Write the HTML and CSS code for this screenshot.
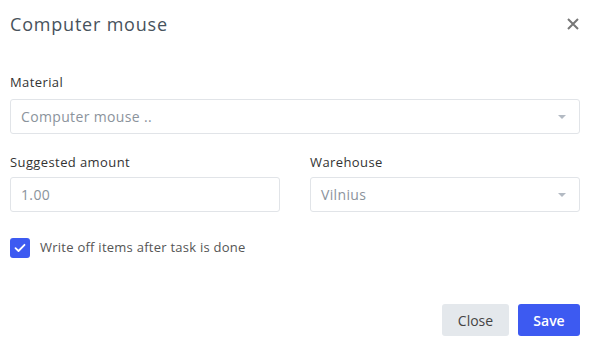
FILE: index.html
```html
<!DOCTYPE html>
<html lang="en">
<head>
    <meta charset="UTF-8">
    <title>Computer mouse</title>
    <link rel="stylesheet" href="styles.css">
</head>
<body>
    <div class="modal">
        <!-- Header -->
        <div class="modal-header">
            <h1 class="modal-title">Computer mouse</h1>
            <button class="close-x" aria-label="Close">
                <svg width="12" height="12" viewBox="0 0 12 12">
                    <path d="M1 1L11 11M11 1L1 11" stroke="#777" stroke-width="2" fill="none"/>
                </svg>
            </button>
        </div>

        <!-- Material -->
        <div class="form-group first">
            <label class="form-label">Material</label>
            <div class="select">
                <span class="placeholder">Computer mouse ..</span>
                <span class="caret"></span>
            </div>
        </div>

        <!-- Amount + warehouse -->
        <div class="form-row">
            <div class="form-group">
                <label class="form-label">Suggested amount</label>
                <div class="input"><span class="placeholder">1.00</span></div>
            </div>
            <div class="form-group">
                <label class="form-label">Warehouse</label>
                <div class="select">
                    <span class="placeholder">Vilnius</span>
                    <span class="caret"></span>
                </div>
            </div>
        </div>

        <!-- Checkbox -->
        <div class="check-row">
            <span class="checkbox">
                <svg width="12" height="10" viewBox="0 0 12 10">
                    <path d="M1.5 5.2L4.5 8L10.5 1.8" stroke="#fff" stroke-width="1.8" fill="none" stroke-linecap="round" stroke-linejoin="round"/>
                </svg>
            </span>
            <span class="check-label">Write off items after task is done</span>
        </div>

        <!-- Footer -->
        <div class="modal-footer">
            <button class="btn btn-close">Close</button>
            <button class="btn btn-save">Save</button>
        </div>
    </div>
</body>
</html>
```

FILE: styles.css
```css
/* Basic Reset */
body, h1, label, button {
    margin: 0;
    padding: 0;
    box-sizing: border-box;
}

body {
    font-family: "Open Sans", Arial, sans-serif;
    background-color: #fff;
    color: #333;
}

.modal {
    width: 592px;
    height: 344px;
    padding: 12px 12px 0 10px;
    box-sizing: border-box;
}

/* Header */
.modal-header {
    display: flex;
    justify-content: space-between;
    align-items: center;
    height: 24px;
}

.modal-title {
    font-size: 18px;
    font-weight: normal;
    line-height: 24px;
    letter-spacing: 0.8px;
    color: #47525c;
}

.close-x {
    background: none;
    border: none;
    width: 12px;
    height: 12px;
    margin-right: 1px;
    margin-top: -1px;
    display: flex;
    cursor: pointer;
}

/* Form */
.form-group.first {
    margin-top: 36px;
}

.form-label {
    display: block;
    font-size: 13px;
    line-height: 20px;
    letter-spacing: 0.4px;
    margin-bottom: 7px;
    color: #333;
}

.form-row {
    display: grid;
    grid-template-columns: 1fr 1fr;
    gap: 30px;
    margin-top: 18px;
}

.form-row .form-label {
    margin-bottom: 5px;
}

.select, .input {
    height: 35px;
    border: 1px solid #e1e4e8;
    border-radius: 3px;
    box-sizing: border-box;
    display: flex;
    align-items: center;
    justify-content: space-between;
    padding: 0 13px 0 10px;
}

.placeholder {
    font-size: 14px;
    letter-spacing: 0.35px;
    color: #8b939c;
}

.caret {
    width: 0;
    height: 0;
    border-left: 4px solid transparent;
    border-right: 4px solid transparent;
    border-top: 4px solid #b3bac3;
}

/* Checkbox */
.check-row {
    display: flex;
    align-items: center;
    gap: 10px;
    margin-top: 26px;
}

.checkbox {
    width: 20px;
    height: 20px;
    border-radius: 3px;
    background-color: #3d5af1;
    display: flex;
    align-items: center;
    justify-content: center;
}

.check-label {
    font-size: 13px;
    letter-spacing: 0.25px;
    margin-top: -2px;
    color: #555;
}

/* Footer */
.modal-footer {
    display: flex;
    justify-content: flex-end;
    gap: 9px;
    margin-top: 46px;
}

.btn {
    height: 32px;
    border: none;
    border-radius: 3px;
    font-family: inherit;
    font-size: 14px;
    cursor: pointer;
}

.btn-close {
    width: 67px;
    background-color: #e4e8ec;
    color: #444;
}

.btn-save {
    width: 62px;
    background-color: #3d5af1;
    color: #fff;
    font-weight: 600;
}
```
